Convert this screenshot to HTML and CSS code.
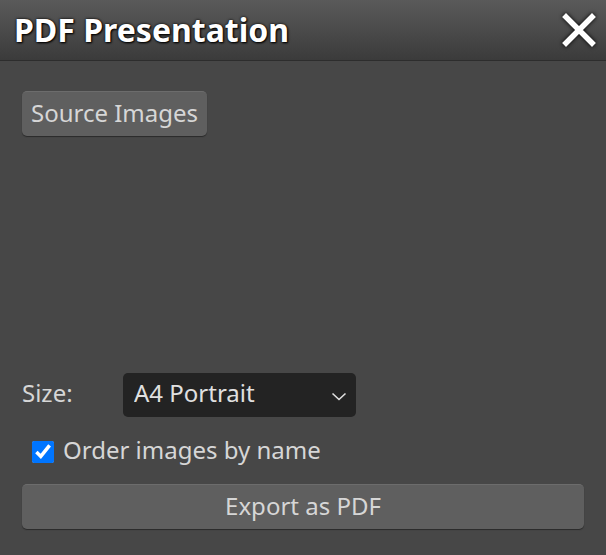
FILE: index.html
```html
<!DOCTYPE html>
<html lang="en">

<head>
  <meta charset="UTF-8" />
  <title>PDF Presentation</title>

  <link rel="stylesheet" href="styles.css">
</head>

<body>
  <div class="dialog">
    <div class="titlebar">
      <h2>PDF Presentation</h2>
      <button class="close" title="Close">
        <svg width="34" height="34" viewBox="0 0 34 34">
          <path d="M4 4 L30 30 M30 4 L4 30" stroke="#fff" stroke-width="5.5" stroke-linecap="square" />
        </svg>
      </button>
    </div>

    <div class="content">
      <button class="btn source">Source Images</button>

      <div class="imagelist"></div>

      <div class="row">
        <label for="size">Size:</label>
        <div class="selectwrap">
          <select id="size">
            <option>A4 Portrait</option>
            <option>A4 Landscape</option>
            <option>Letter Portrait</option>
            <option>Letter Landscape</option>
          </select>
          <svg class="chevron" width="16" height="9" viewBox="0 0 16 9">
            <path d="M1.5 1.5 L8 7.5 L14.5 1.5" fill="none" stroke="#e0e0e0" stroke-width="1.6" />
          </svg>
        </div>
      </div>

      <div class="checkrow">
        <input type="checkbox" id="byname" checked />
        <label for="byname">Order images by name</label>
      </div>

      <button class="btn export">Export as PDF</button>
    </div>
  </div>
</body>

</html>
```

FILE: styles.css
```css
body {
  margin: 0;
  background-color: #474747;
  font-family: "Noto Sans", "Open Sans", sans-serif;
  color: #d6d6d6;
}

.dialog {
  height: 555px;
  display: flex;
  flex-direction: column;
}

.titlebar {
  height: 60px;
  display: flex;
  align-items: center;
  justify-content: space-between;
  padding: 0 10px 0 14px;
  background: linear-gradient(#5a5a5a, #3b3b3b);
  border-bottom: 1px solid #2d2d2d;
  flex-shrink: 0;
}

.titlebar h2 {
  margin: 0 0 2px;
  font-size: 32px;
  font-weight: 700;
  color: #fff;
  text-shadow: 0 0 3px #000, 1px 1px 2px #000;
}

.close {
  background: none;
  border: none;
  padding: 0;
  width: 34px;
  height: 34px;
  cursor: pointer;
  filter: drop-shadow(0 0 2px #000);
}

.content {
  flex: 1;
  display: flex;
  flex-direction: column;
  align-items: flex-start;
  padding: 30px 22px 26px;
}

.btn {
  background-color: #5f5f5f;
  border: none;
  border-top: 1px solid #6c6c6c;
  border-radius: 5px;
  box-shadow: 0 1px 1px #2a2a2a;
  color: #d6d6d6;
  font-family: "Noto Sans", "Open Sans", sans-serif;
  font-size: 24px;
  height: 45px;
  padding-bottom: 4px;
  cursor: pointer;
}

.source {
  width: 185px;
  padding-left: 0;
  padding-right: 0;
}

.imagelist {
  flex: 1;
  align-self: stretch;
}

.row {
  display: flex;
  align-items: center;
  height: 44px;
}

.row label {
  width: 101px;
  font-size: 24px;
  color: #d6d6d6;
  padding-bottom: 6px;
}

.selectwrap {
  position: relative;
}

select {
  appearance: none;
  width: 233px;
  height: 44px;
  padding: 0 11px 5px;
  background-color: #232323;
  border: none;
  border-radius: 5px;
  color: #e0e0e0;
  font-family: "Noto Sans", "Open Sans", sans-serif;
  font-size: 24px;
}

.chevron {
  position: absolute;
  right: 9px;
  top: 19px;
  pointer-events: none;
}

.checkrow {
  display: flex;
  align-items: center;
  height: 45px;
  margin: 12px 0 10px 10px;
}

.checkrow input {
  width: 22px;
  height: 22px;
  margin: 0 9px 0 0;
}

.checkrow label {
  font-size: 24px;
  color: #d6d6d6;
  padding-bottom: 4px;
}

.export {
  align-self: stretch;
}
```
